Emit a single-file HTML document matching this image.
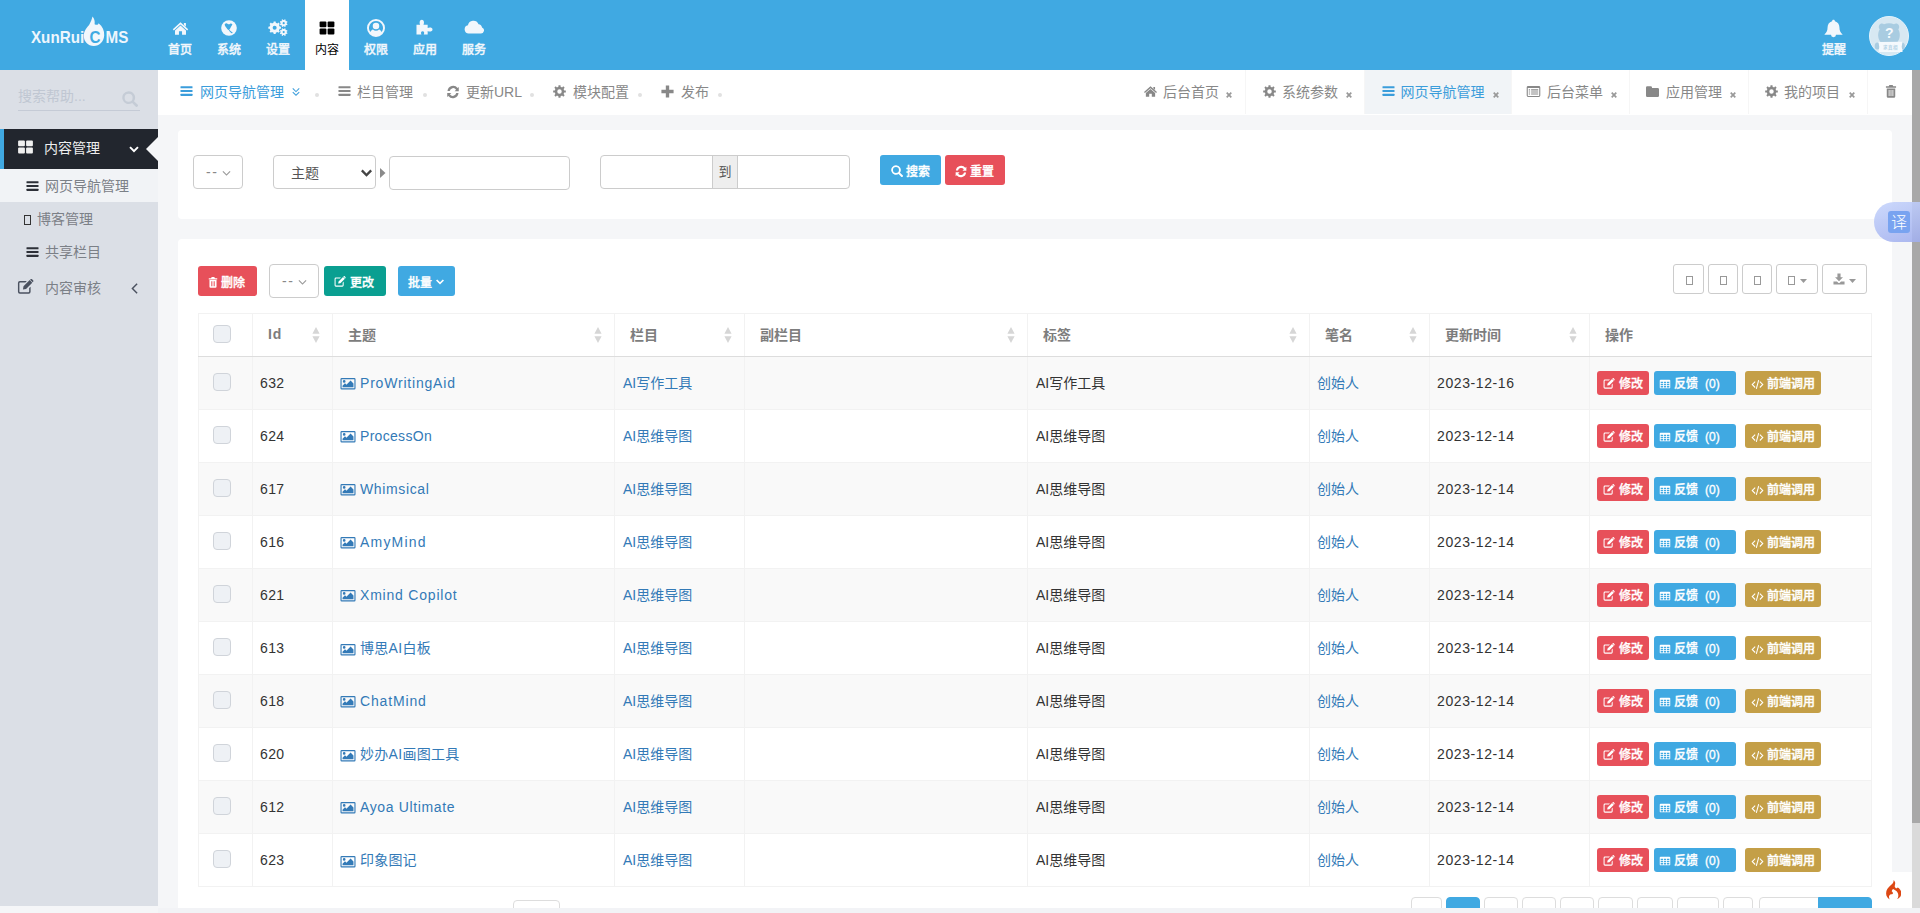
<!DOCTYPE html>
<html lang="zh-CN"><head><meta charset="utf-8"><title>XunRuiCMS</title>
<style>
*{box-sizing:border-box}
html,body{margin:0;padding:0}
body{width:1920px;height:913px;overflow:hidden;position:relative;background:#f5f6f8;font-family:"Liberation Sans","Noto Sans CJK SC",sans-serif;font-size:14px;color:#333}
svg.i{display:inline-block;vertical-align:middle}
a{color:#337ab7;text-decoration:none}
.abs{position:absolute}
/* header */
#hdr{position:absolute;left:0;top:0;width:1920px;height:70px;background:#40a9e2}
#logo{position:absolute;left:31px;top:28px;font:bold 16.500px/18px "Liberation Sans",sans-serif;color:#eef6fd;white-space:nowrap;transform:scaleX(.92);transform-origin:0 0;z-index:3}
#logo .ms{position:absolute;left:81px;top:0}
#logo .c{position:absolute;left:63.500px;top:0;color:#40a9e2;font-size:16.500px}
#flame{position:absolute;left:83px;top:16px}
.nv{position:absolute;top:0;width:44px;height:70px;text-align:center;color:#f2f7fc}
.nv svg{position:absolute;left:14px;top:20px}
.nv span{position:absolute;left:-10px;right:-10px;top:42px;font-size:12px;line-height:16px;font-weight:500;-webkit-text-stroke:.35px currentColor}
.nv.on{background:#fff;color:#000}
.nv.on span{font-weight:400;-webkit-text-stroke:0}
/* sidebar */
#side{position:absolute;left:0;top:70px;width:158px;height:836px;background:#dbdfe6}
#sq{position:absolute;left:18px;top:18px;font-size:14px;line-height:16px;color:#c0c7d2}
#sql{position:absolute;left:18px;top:40px;width:122px;height:1px;background:#c5cbd6}
#side .m1{position:absolute;left:0;top:59px;width:158px;height:40px;background:#22262e;border-left:4px solid #40a9e2;color:#fff}
#side .m1 .t{position:absolute;left:40px;top:9px;color:#eee;font-size:14px;line-height:20px}
#side .m1:after{content:"";position:absolute;right:0;top:8px;border-right:12px solid #f5f6f8;border-top:12px solid transparent;border-bottom:12px solid transparent}
#side .s{position:absolute;left:0;width:158px;height:33px;color:#7b8087;font-size:14px;line-height:35px}
#side .s.on{background:#f1f3f6}
#side .s .t{position:absolute;left:45px;top:0}
#side .m2{position:absolute;left:0;top:198px;width:158px;height:40px;color:#7b8087}
#side .m2 .t{position:absolute;left:45px;top:10px;font-size:14px;line-height:20px}
/* tabs */
#tabs{position:absolute;left:158px;top:70px;width:1754px;height:45px;background:#fff}
#tabs .l{position:absolute;top:0;height:44px;line-height:44px;font-size:14px;color:#888;white-space:nowrap}
#tabs .l.on{color:#3b9ddb}
#tabs .dot{position:absolute;top:23px;width:4px;height:4px;border-radius:2px;background:#e1e1e1}
#tabs .r{position:absolute;top:0;height:44px;line-height:44px;font-size:14px;color:#888;white-space:nowrap;border-left:1px solid #f6f6f6}
#tabs .r.on{background:#f1f4f7;color:#3b9ddb}
#tabs .x{font:bold 10px/10px "Liberation Sans",sans-serif;color:#9a9a9a}
/* panels */
.pan{position:absolute;left:178px;width:1714px;background:#fff;border-radius:4px}
.inp{position:absolute;height:34px;border:1px solid #ccc;border-radius:4px;background:#fff}
.btn{position:absolute;height:30px;border-radius:3px;color:#fff;font-size:12px;line-height:30px;white-space:nowrap;font-weight:500;-webkit-text-stroke:.35px #fff}
.btn.red{background:#e7505a}.btn.blue{background:#40a9e2}.btn.green{background:#0a9f91}
.tb{position:absolute;top:264px;height:30px;border:1px solid #ccc;border-radius:3px;background:#fff;color:#999}
/* table */
table{position:absolute;left:198px;top:313px;border-collapse:collapse;table-layout:fixed;width:1673px}
th,td{border:1px solid #f2f2f2;padding:0;text-align:left;vertical-align:middle;position:relative;white-space:nowrap}
th{height:43px;font-size:14px;font-weight:bold;color:#7d7d7d;border-bottom:1px solid #ddd;padding-left:15px}
th span.h{position:relative;top:-1.500px}
td{height:53px;font-size:14px;color:#333;padding-left:7px}
tr:nth-child(odd) td{background:#f9f9f9}
.srt{position:absolute;right:12px;top:13px}
.cb{display:block;width:18px;height:18px;border:1px solid #d0d4da;border-radius:4px;background:#eef1f5;margin-left:6px;position:relative;top:-1px}
td.c0,th.c0{padding-left:8px}
td.c2 svg{margin-right:4px;position:relative;top:-1px}
.b{position:absolute;top:14px;height:24px;border-radius:3px;color:#fff;font-size:12px;line-height:24px;font-weight:bold;white-space:nowrap}
.b b,.b em{position:absolute;top:1px;font-style:normal;font-weight:500;-webkit-text-stroke:.35px #fff}
.b svg{position:absolute}
.b.red{background:#e7505a;left:7px;width:52px}.b.blue{background:#40a9e2;left:64px;width:82px}.b.yel{background:#c49f47;left:155px;width:76px}
.pg{position:absolute;top:897px;height:20px;border:1px solid #ddd;border-radius:4px 4px 0 0;background:#fff}

.tt{letter-spacing:.8px}
.tt.cj{top:-1px;position:relative}
td.c1{letter-spacing:.4px}
td.c3,td.c5{padding-left:8px}
td.c7{letter-spacing:.6px}
td .cj{position:relative;top:-1px}

</style></head>
<body>
<div id="hdr">
  <svg id="flame" width="22" height="31" viewBox="0 0 22 31"><path fill="#f2f7fc" fill-rule="evenodd" d="M9.500.6C11.500 3 12 5.500 11.600 8.200 13.800 9.400 15.200 8.800 15.600 7.200 19.500 10.500 21.500 14.500 21.200 19.500 20.800 25.500 16.500 30 10.800 30 5 30 .8 25.800.8 19.800.8 13.800 4.500 11.500 6.500 8.200 7.900 5.800 8.800 3.400 9.500.6Z"/></svg>
  <div id="logo">XunRui<span class="c">C</span><span class="ms">MS</span></div>
  <div class="nv" style="left:158px"><svg class="i" width="17" height="13" viewBox="0 0 16 13.500" fill="currentColor" style="left:13.500px;top:21.500px"><path d="M8 .3 16 7.400 14.900 8.700 8 2.700 1.100 8.700 0 7.400Z"/><path d="M8 3.700 13.700 8.700V13.200H9.600V9.600H6.400V13.200H2.300V8.700Z"/><path d="M11.500 1.100h2.100V4.900l-2.100-1.900z"/></svg><span>首页</span></div>
  <div class="nv" style="left:207px"><svg class="i" width="16" height="16" viewBox="0 0 16 16" fill="currentColor" style=""><circle cx="8" cy="8" r="7.800"/><path fill="#40a9e2" d="M3.600 4.600C4.500 3.100 5.800 3.100 6.800 3.900 7.600 4.500 8.400 4.300 9.200 3.700 10 3.300 11 3.700 11.400 4.500 10.600 5.700 10 6.700 9.400 7.900 8.900 8.900 8.400 9.700 7.600 9.900 6.800 9.900 6.200 9.100 5.600 8.100 4.900 7.100 3.900 6.100 3.600 4.600ZM7.700 10 8.300 9.800C9.100 10.800 10 11.600 11.200 12.200L11.900 13.100 10.500 13.200C9.300 12.400 8.300 11.300 7.700 10Z"/></svg><span>系统</span></div>
  <div class="nv" style="left:256px"><svg class="i" width="20" height="17" viewBox="0 0 18.500 16" fill="currentColor" style="left:12px;top:19px"><path fill-rule="evenodd" d="M10.78 7.12 L12.03 7.26 L12.03 9.14 L10.78 9.28 L10.17 10.74 L10.95 11.73 L9.63 13.05 L8.64 12.27 L7.18 12.88 L7.04 14.13 L5.16 14.13 L5.02 12.88 L3.56 12.27 L2.57 13.05 L1.25 11.73 L2.03 10.74 L1.42 9.28 L0.17 9.14 L0.17 7.26 L1.42 7.12 L2.03 5.66 L1.25 4.67 L2.57 3.35 L3.56 4.13 L5.02 3.52 L5.16 2.27 L7.04 2.27 L7.18 3.52 L8.64 4.13 L9.63 3.35 L10.95 4.67 L10.17 5.66Z M4.20 8.20 a1.90 1.90 0 1 0 3.80 0 a1.90 1.90 0 1 0 -3.80 0Z M17.46 4.37 L18.20 4.75 L17.76 5.82 L16.96 5.58 L16.29 6.25 L16.54 7.05 L15.47 7.50 L15.08 6.76 L14.13 6.76 L13.75 7.50 L12.68 7.06 L12.92 6.26 L12.25 5.59 L11.45 5.84 L11.00 4.77 L11.74 4.38 L11.74 3.43 L11.00 3.05 L11.44 1.98 L12.24 2.22 L12.91 1.55 L12.66 0.75 L13.73 0.30 L14.12 1.04 L15.07 1.04 L15.45 0.30 L16.52 0.74 L16.28 1.54 L16.95 2.21 L17.75 1.96 L18.20 3.03 L17.46 3.42Z M13.60 3.90 a1.00 1.00 0 1 0 2.00 0 a1.00 1.00 0 1 0 -2.00 0Z M17.46 12.77 L18.20 13.15 L17.76 14.22 L16.96 13.98 L16.29 14.65 L16.54 15.45 L15.47 15.90 L15.08 15.16 L14.13 15.16 L13.75 15.90 L12.68 15.46 L12.92 14.66 L12.25 13.99 L11.45 14.24 L11.00 13.17 L11.74 12.78 L11.74 11.83 L11.00 11.45 L11.44 10.38 L12.24 10.62 L12.91 9.95 L12.66 9.15 L13.73 8.70 L14.12 9.44 L15.07 9.44 L15.45 8.70 L16.52 9.14 L16.28 9.94 L16.95 10.61 L17.75 10.36 L18.20 11.43 L17.46 11.82Z M13.60 12.30 a1.00 1.00 0 1 0 2.00 0 a1.00 1.00 0 1 0 -2.00 0Z"/></svg><span>设置</span></div>
  <div class="nv on" style="left:305px"><svg class="i" width="16" height="16" viewBox="0 0 16 16" fill="currentColor" style=""><rect x="0.6" y="1.4" width="6.8" height="5.9" rx="1"/><rect x="8.6" y="1.4" width="6.8" height="5.9" rx="1"/><rect x="0.6" y="8.6" width="6.8" height="5.9" rx="1"/><rect x="8.6" y="8.6" width="6.8" height="5.9" rx="1"/></svg><span>内容</span></div>
  <div class="nv" style="left:354px"><svg class="i" width="18" height="18" viewBox="0 0 16 16" fill="currentColor" style="left:13px;top:19px"><path fill-rule="evenodd" d="M8 0a8 8 0 1 0 0 16A8 8 0 0 0 8 0ZM8 1.800a6.200 6.200 0 0 1 5 9.850C12.600 10.300 11.700 9.600 10.700 9.300A3.600 3.600 0 0 1 5.300 9.300C4.300 9.600 3.400 10.300 3 11.650A6.200 6.200 0 0 1 8 1.800ZM8 3.300a2.900 2.900 0 1 0 0 5.800 2.900 2.900 0 0 0 0-5.800Z"/></svg><span>权限</span></div>
  <div class="nv" style="left:403px"><svg class="i" width="17" height="16" viewBox="0 0 17.500 16" fill="currentColor" style="left:13px;top:19px"><path d="M.5 5.600H4.300C3.300 4 3.600.600 6 .600S8.700 4 7.700 5.600H12V9C13.500 8 17 8.100 17 10.500S13.500 13 12 12V15.600H8C8.900 14 8.400 12.300 6.800 12.300S4.700 14 5.600 15.600H.5Z"/></svg><span>应用</span></div>
  <div class="nv" style="left:452px"><svg class="i" width="20" height="14" viewBox="0 0 20 14.500" fill="currentColor" style="left:12px;top:20px"><path d="M4.500 14A4.300 4.300 0 0 1 3.700 5.500 5.800 5.800 0 0 1 14.700 4.300 4 4 0 0 1 18.300 7.700 3.300 3.300 0 0 1 16.500 14Z"/></svg><span>服务</span></div>
  <div class="nv" style="left:1811px"><svg class="i" width="19" height="19" viewBox="0 0 16 16" fill="currentColor" style="left:13px;top:18.500px"><path d="M8 .6c.800 0 1.200.600 1.200 1.200C11.700 2.500 13 4.600 13 7.200c0 2.800 1 4.500 2.500 5.600V13.200H.5V12.800C2 11.700 3 10 3 7.200 3 4.600 4.300 2.500 6.800 1.800 6.800 1.200 7.200.6 8 .600ZM5.900 13.200h4.200a2.100 2.100 0 0 1-4.200 0Z"/></svg><span style="left:-9px;right:-11px">提醒</span></div>
  <svg id="ava" style="position:absolute;left:1869px;top:16px" width="40" height="40" viewBox="0 0 40 40">
    <circle cx="20" cy="20" r="19.500" fill="#d7e8f2" stroke="#e4f3fc" stroke-width="1"/>
    <path fill="#a9cce1" d="M10.200 9.200C11.200 7.300 13.600 7.100 15 8.300 18 7 22 7 25 8.300 26.400 7.100 28.800 7.300 29.800 9.200 30.600 10.700 30.200 12.300 29.300 13.200 31.500 17 31.400 22 28.500 26H11.500C8.600 22 8.500 17 10.700 13.200 9.800 12.300 9.400 10.700 10.200 9.200Z"/>
    <ellipse cx="8.300" cy="30" rx="2.600" ry="3.600" fill="#a9cce1"/><ellipse cx="33.200" cy="30" rx="2.600" ry="3.600" fill="#a9cce1"/>
    <path fill="#f4f9fd" d="M9.500 26 33.500 25.700 32.700 30.800 33.600 36 9.600 36 10.300 31Z"/>
    <text x="21.500" y="33.300" font-family="Liberation Sans, Noto Sans CJK SC, sans-serif" font-size="4.500" font-weight="bold" fill="#b5d3e5" text-anchor="middle" letter-spacing=".5">求真相</text>
    <text x="20.300" y="22.300" font-family="Liberation Sans, sans-serif" font-size="14" font-weight="bold" fill="#f6fafd" text-anchor="middle">?</text>
  </svg>
</div>

<div id="side">
  <div id="sq">搜索帮助...</div>
  <div id="sql"></div>
  <svg class="i" width="16" height="16" viewBox="0 0 14 14" fill="currentColor" style="position:absolute;left:122px;top:21px;color:#c5ccd6"><path fill-rule="evenodd" d="M5.800.2A5.600 5.600 0 1 0 8.900 10.500L11.900 13.600A1.200 1.200 0 0 0 13.600 11.900L10.500 8.900A5.600 5.600 0 0 0 5.800.2ZM5.800 2.300A3.500 3.500 0 1 1 5.800 9.300 3.500 3.500 0 0 1 5.800 2.300Z"/></svg>
  <div class="m1"><svg class="i" width="17" height="16" viewBox="0 0 16 16" fill="currentColor" style="position:absolute;left:12.500px;top:10px;color:#f0f0f0"><rect x="0.6" y="1.4" width="6.8" height="5.9" rx="1"/><rect x="8.6" y="1.4" width="6.8" height="5.9" rx="1"/><rect x="0.6" y="8.6" width="6.8" height="5.9" rx="1"/><rect x="8.6" y="8.6" width="6.8" height="5.9" rx="1"/></svg><span class="t">内容管理</span><svg class="i" width="10" height="7" viewBox="0 0 10 7.500" fill="currentColor" style="position:absolute;left:125px;top:17px"><path d="M1.500.5 5 4 8.500.5 10 2 5 7 0 2Z"/></svg></div>
  <div class="s on" style="top:99px"><svg class="i" width="13" height="12" viewBox="0 0 12 12" fill="currentColor" style="position:absolute;left:25.500px;top:11px;color:#2d3038"><rect x="0" y="1.200" width="12" height="2.100" rx=".4"/><rect x="0" y="5" width="12" height="2.100" rx=".4"/><rect x="0" y="8.800" width="12" height="2.100" rx=".4"/></svg><span class="t">网页导航管理</span></div>
  <div class="s" style="top:132px"><span style="position:absolute;left:24px;top:13px;width:7px;height:10px;border:1px solid #333"></span><span class="t" style="left:37px">博客管理</span></div>
  <div class="s" style="top:165px"><svg class="i" width="13" height="12" viewBox="0 0 12 12" fill="currentColor" style="position:absolute;left:25.500px;top:11px;color:#2d3038"><rect x="0" y="1.200" width="12" height="2.100" rx=".4"/><rect x="0" y="5" width="12" height="2.100" rx=".4"/><rect x="0" y="8.800" width="12" height="2.100" rx=".4"/></svg><span class="t">共享栏目</span></div>
  <div class="m2"><svg class="i" width="17" height="15" viewBox="0 0 15 13.500" fill="currentColor" style="position:absolute;left:17px;top:11px;color:#4b5260"><path d="M2.400 1.800H8.700L7.400 3.100H2.600C2.300 3.100 2 3.400 2 3.700V11.300C2 11.600 2.300 11.900 2.600 11.900H10.200C10.500 11.900 10.800 11.600 10.800 11.300V8.200L12.100 6.900V11.500A1.700 1.700 0 0 1 10.400 13.200H2.400A1.700 1.700 0 0 1 .7 11.500V3.500A1.700 1.700 0 0 1 2.400 1.800Z"/><path d="M11.300 1 13.600 3.300 8 8.900 5.200 9.400 5.700 6.600ZM12 .3C12.400-.1 13-.1 13.400.3L14.300 1.200C14.700 1.600 14.700 2.200 14.300 2.600L14 2.900 11.700.6Z"/></svg><span class="t">内容审核</span><svg class="i" width="7" height="11" viewBox="0 0 7.500 11.200" fill="currentColor" style="position:absolute;left:131px;top:15px;color:#4b5260"><path d="M6 0 7.100 1.100 2.600 5.600 7.100 10.100 6 11.200.4 5.600Z"/></svg></div>
</div>

<div id="tabs">
  <div class="l on" style="left:22px"><svg class="i" width="13" height="12" viewBox="0 0 12 12" fill="currentColor" style="position:relative;top:-2px;margin-right:7px"><rect x="0" y="1.200" width="12" height="2.100" rx=".4"/><rect x="0" y="5" width="12" height="2.100" rx=".4"/><rect x="0" y="8.800" width="12" height="2.100" rx=".4"/></svg>网页导航管理<svg class="i" width="8" height="8" viewBox="0 0 9 10" fill="currentColor" style="position:relative;top:-1px;margin-left:8px"><path d="M.9 0 4.500 3.600 8.100 0 9 .9 4.500 5.400 0 .9ZM.9 4.600 4.500 8.200 8.100 4.600 9 5.500 4.500 10 0 5.500Z"/></svg></div>
  <div class="dot" style="left:157px"></div>
  <div class="l" style="left:180px"><svg class="i" width="13" height="12" viewBox="0 0 12 12" fill="currentColor" style="position:relative;top:-2px;margin-right:6px"><rect x="0" y="1.200" width="12" height="2.100" rx=".4"/><rect x="0" y="5" width="12" height="2.100" rx=".4"/><rect x="0" y="8.800" width="12" height="2.100" rx=".4"/></svg>栏目管理</div>
  <div class="dot" style="left:265px"></div>
  <div class="l" style="left:288px"><svg class="i" width="14" height="14" viewBox="0 0 14 16" fill="currentColor" style="position:relative;top:-1px;margin-right:6px"><path d="M13.600 7H8.800L10.500 5.300A4 4 0 0 0 3.300 6.800H.7A6.500 6.500 0 0 1 12.300 3.500L13.600 2.200ZM.4 9H5.200L3.500 10.700A4 4 0 0 0 10.700 9.200H13.300A6.500 6.500 0 0 1 1.700 12.500L.4 13.800Z"/></svg>更新URL</div>
  <div class="dot" style="left:372px"></div>
  <div class="l" style="left:395px"><svg class="i" width="13" height="13" viewBox="0 0 14 14" fill="currentColor" style="position:relative;top:-2px;margin-right:7px"><path fill-rule="evenodd" d="M12.07 5.83 L13.82 5.92 L13.82 8.08 L12.07 8.17 L11.41 9.75 L12.58 11.06 L11.06 12.58 L9.75 11.41 L8.17 12.07 L8.08 13.82 L5.92 13.82 L5.83 12.07 L4.25 11.41 L2.94 12.58 L1.42 11.06 L2.59 9.75 L1.93 8.17 L0.18 8.08 L0.18 5.92 L1.93 5.83 L2.59 4.25 L1.42 2.94 L2.94 1.42 L4.25 2.59 L5.83 1.93 L5.92 0.18 L8.08 0.18 L8.17 1.93 L9.75 2.59 L11.06 1.42 L12.58 2.94 L11.41 4.25Z M4.60 7.00 a2.40 2.40 0 1 0 4.80 0 a2.40 2.40 0 1 0 -4.80 0Z"/></svg>模块配置</div>
  <div class="dot" style="left:480px"></div>
  <div class="l" style="left:503px"><svg class="i" width="13" height="13" viewBox="0 0 12.400 12.400" fill="currentColor" style="position:relative;top:-2px;margin-right:7px"><path d="M4.600.4H7.800V4.600H12V7.800H7.800V12H4.600V7.800H.4V4.600H4.600Z"/></svg>发布</div>
  <div class="dot" style="left:560px"></div>

  <div class="r" style="left:968px;width:119px;border-left:0"><span style="position:absolute;left:18px"><svg class="i" width="13" height="11" viewBox="0 0 16 13.500" fill="currentColor" style="position:relative;top:-2px;margin-right:6px"><path d="M8 .3 16 7.400 14.900 8.700 8 2.700 1.100 8.700 0 7.400Z"/><path d="M8 3.700 13.700 8.700V13.200H9.600V9.600H6.400V13.200H2.300V8.700Z"/><path d="M11.500 1.100h2.100V4.900l-2.100-1.900z"/></svg>后台首页</span><svg class="abs" style="left:99.5px;top:22px" width="6" height="6" viewBox="0 0 6 6"><path d="M.7.7 5.300 5.300M5.300.7.7 5.300" stroke="#999" stroke-width="1.700" fill="none"/></svg></div>
  <div class="r" style="left:1087px;width:119px"><span style="position:absolute;left:17px"><svg class="i" width="13" height="13" viewBox="0 0 14 14" fill="currentColor" style="position:relative;top:-2px;margin-right:6px"><path fill-rule="evenodd" d="M12.07 5.83 L13.82 5.92 L13.82 8.08 L12.07 8.17 L11.41 9.75 L12.58 11.06 L11.06 12.58 L9.75 11.41 L8.17 12.07 L8.08 13.82 L5.92 13.82 L5.83 12.07 L4.25 11.41 L2.94 12.58 L1.42 11.06 L2.59 9.75 L1.93 8.17 L0.18 8.08 L0.18 5.92 L1.93 5.83 L2.59 4.25 L1.42 2.94 L2.94 1.42 L4.25 2.59 L5.83 1.93 L5.92 0.18 L8.08 0.18 L8.17 1.93 L9.75 2.59 L11.06 1.42 L12.58 2.94 L11.41 4.25Z M4.60 7.00 a2.40 2.40 0 1 0 4.80 0 a2.40 2.40 0 1 0 -4.80 0Z"/></svg>系统参数</span><svg class="abs" style="left:99.5px;top:22px" width="6" height="6" viewBox="0 0 6 6"><path d="M.7.7 5.300 5.300M5.300.7.7 5.300" stroke="#999" stroke-width="1.700" fill="none"/></svg></div>
  <div class="r on" style="left:1205.500px;width:147px"><span style="position:absolute;left:17px"><svg class="i" width="13" height="12" viewBox="0 0 12 12" fill="currentColor" style="position:relative;top:-2px;margin-right:6px"><rect x="0" y="1.200" width="12" height="2.100" rx=".4"/><rect x="0" y="5" width="12" height="2.100" rx=".4"/><rect x="0" y="8.800" width="12" height="2.100" rx=".4"/></svg>网页导航管理</span><svg class="abs" style="left:128px;top:22px" width="6" height="6" viewBox="0 0 6 6"><path d="M.7.7 5.300 5.300M5.300.7.7 5.300" stroke="#999" stroke-width="1.700" fill="none"/></svg></div>
  <div class="r" style="left:1353px;width:118px"><span style="position:absolute;left:14px"><svg class="i" width="15" height="13" viewBox="0 0 14 13" fill="currentColor" style="position:relative;top:-2px;margin-right:6px"><path fill-rule="evenodd" d="M1.600 1H12.400A1.400 1.400 0 0 1 13.800 2.400V10.600A1.400 1.400 0 0 1 12.400 12H1.600A1.400 1.400 0 0 1 .2 10.600V2.400A1.400 1.400 0 0 1 1.600 1ZM1.300 3.100V10.600C1.300 10.800 1.400 10.900 1.600 10.900H12.400C12.600 10.900 12.700 10.800 12.700 10.600V3.100ZM2.300 4.300H3.600V5.400H2.300ZM4.600 4.300H11.700V5.400H4.600ZM2.300 6.400H3.600V7.500H2.300ZM4.600 6.400H11.700V7.500H4.600ZM2.300 8.500H3.600V9.600H2.300ZM4.600 8.500H11.700V9.600H4.600Z"/></svg>后台菜单</span><svg class="abs" style="left:99px;top:22px" width="6" height="6" viewBox="0 0 6 6"><path d="M.7.7 5.300 5.300M5.300.7.7 5.300" stroke="#999" stroke-width="1.700" fill="none"/></svg></div>
  <div class="r" style="left:1471px;width:119px"><span style="position:absolute;left:15px"><svg class="i" width="15" height="13" viewBox="0 0 14 13" fill="currentColor" style="position:relative;top:-2px;margin-right:6px"><path d="M.5 2.500A1.300 1.300 0 0 1 1.800 1.200H5.200A1.300 1.300 0 0 1 6.500 2.500V3H12.200A1.300 1.300 0 0 1 13.500 4.300V10.700A1.300 1.300 0 0 1 12.200 12H1.800A1.300 1.300 0 0 1 .5 10.700Z"/></svg>应用管理</span><svg class="abs" style="left:99.5px;top:22px" width="6" height="6" viewBox="0 0 6 6"><path d="M.7.7 5.300 5.300M5.300.7.7 5.300" stroke="#999" stroke-width="1.700" fill="none"/></svg></div>
  <div class="r" style="left:1590px;width:119px"><span style="position:absolute;left:16px"><svg class="i" width="13" height="13" viewBox="0 0 14 14" fill="currentColor" style="position:relative;top:-2px;margin-right:6px"><path fill-rule="evenodd" d="M12.07 5.83 L13.82 5.92 L13.82 8.08 L12.07 8.17 L11.41 9.75 L12.58 11.06 L11.06 12.58 L9.75 11.41 L8.17 12.07 L8.08 13.82 L5.92 13.82 L5.83 12.07 L4.25 11.41 L2.94 12.58 L1.42 11.06 L2.59 9.75 L1.93 8.17 L0.18 8.08 L0.18 5.92 L1.93 5.83 L2.59 4.25 L1.42 2.94 L2.94 1.42 L4.25 2.59 L5.83 1.93 L5.92 0.18 L8.08 0.18 L8.17 1.93 L9.75 2.59 L11.06 1.42 L12.58 2.94 L11.41 4.25Z M4.60 7.00 a2.40 2.40 0 1 0 4.80 0 a2.40 2.40 0 1 0 -4.80 0Z"/></svg>我的项目</span><svg class="abs" style="left:99.5px;top:22px" width="6" height="6" viewBox="0 0 6 6"><path d="M.7.7 5.300 5.300M5.300.7.7 5.300" stroke="#999" stroke-width="1.700" fill="none"/></svg></div>
  <div class="r" style="left:1709px;width:45px"><svg class="i" width="12" height="13" viewBox="0 0 13 14" fill="currentColor" style="position:absolute;left:17px;top:15px"><path fill-rule="evenodd" d="M4 1.400 4.800 0H8.200L9 1.400H12V3H1V1.400ZM1.900 3.800H11.100V12.500A1.400 1.400 0 0 1 9.700 13.900H3.300A1.400 1.400 0 0 1 1.900 12.500ZM4 5.500V12H4.900V5.500ZM6.050 5.500V12H6.950V5.500ZM8.100 5.500V12H9V5.500Z"/></svg></div>
</div>

<div class="pan" style="top:130px;height:89px"></div>
<div class="pan" style="top:239px;height:690px"></div>

<div class="inp" style="left:193px;top:155px;width:50px"><span style="position:absolute;left:12px;top:8px;font-size:14px;line-height:16px;color:#888;letter-spacing:1.500px">--</span><svg class="i" width="9" height="6" viewBox="0 0 10 7.500" fill="currentColor" style="position:absolute;left:28px;top:14px;color:#999"><path d="M1 1.200 5 5.200 9 1.200 10 2.200 5 7.200 0 2.200Z"/></svg></div>
<div class="inp" style="left:273px;top:155px;width:103px"><span style="position:absolute;left:17px;top:8px;font-size:14px;line-height:18px;color:#555">主题</span><svg class="i" width="11" height="8" viewBox="0 0 10 7.200" fill="currentColor" style="position:absolute;left:87px;top:12.500px;color:#444"><path d="M1.500.5 5 4 8.500.5 10 2 5 7 0 2Z"/></svg></div>
<svg class="abs" style="left:380px;top:168px" width="6" height="10" viewBox="0 0 6 10"><path d="M0 0 5.500 5 0 10Z" fill="#8a8a8a"/></svg>
<div class="inp" style="left:389px;top:156px;width:181px"></div>
<div class="inp" style="left:600px;top:155px;width:250px"><div style="position:absolute;left:111px;top:-1px;width:26px;height:34px;background:#eee;border:1px solid #ccc;text-align:center;line-height:32px;font-size:13px;color:#555">到</div></div>
<div class="btn blue" style="left:880px;top:155px;width:61px"><svg class="i" width="12" height="12" viewBox="0 0 14 14" fill="currentColor" style="position:absolute;left:11px;top:10px"><path fill-rule="evenodd" d="M5.800.2A5.600 5.600 0 1 0 8.900 10.500L11.900 13.600A1.200 1.200 0 0 0 13.600 11.900L10.500 8.900A5.600 5.600 0 0 0 5.800.2ZM5.800 2.300A3.500 3.500 0 1 1 5.800 9.300 3.500 3.500 0 0 1 5.800 2.300Z"/></svg><span style="position:absolute;left:26px;top:1.500px">搜索</span></div>
<div class="btn red" style="left:945px;top:155px;width:60px"><svg class="i" width="12" height="13" viewBox="0 0 14 16" fill="currentColor" style="position:absolute;left:10px;top:9.500px"><path d="M13.600 7H8.800L10.500 5.300A4 4 0 0 0 3.300 6.800H.7A6.500 6.500 0 0 1 12.300 3.500L13.600 2.200ZM.4 9H5.200L3.500 10.700A4 4 0 0 0 10.700 9.200H13.300A6.500 6.500 0 0 1 1.700 12.500L.4 13.800Z"/></svg><span style="position:absolute;left:25px;top:1.500px">重置</span></div>

<div class="btn red" style="left:198px;top:266px;width:59px"><svg class="i" width="10" height="11" viewBox="0 0 13 14" fill="currentColor" style="position:absolute;left:10px;top:10.500px"><path fill-rule="evenodd" d="M4 1.400 4.800 0H8.200L9 1.400H12V3H1V1.400ZM1.900 3.800H11.100V12.500A1.400 1.400 0 0 1 9.700 13.900H3.300A1.400 1.400 0 0 1 1.900 12.500ZM4 5.500V12H4.900V5.500ZM6.050 5.500V12H6.950V5.500ZM8.100 5.500V12H9V5.500Z"/></svg><span style="position:absolute;left:23px;top:1.500px">删除</span></div>
<div class="inp" style="left:269px;top:264px;width:50px"><span style="position:absolute;left:12px;top:8px;font-size:14px;line-height:16px;color:#888;letter-spacing:1.500px">--</span><svg class="i" width="9" height="6" viewBox="0 0 10 7.500" fill="currentColor" style="position:absolute;left:28px;top:14px;color:#999"><path d="M1 1.200 5 5.200 9 1.200 10 2.200 5 7.200 0 2.200Z"/></svg></div>
<div class="btn green" style="left:324px;top:266px;width:62px"><svg class="i" width="12" height="11" viewBox="0 0 15 13.500" fill="currentColor" style="position:absolute;left:10px;top:10px"><path d="M2.400 1.800H8.700L7.400 3.100H2.600C2.300 3.100 2 3.400 2 3.700V11.300C2 11.600 2.300 11.900 2.600 11.900H10.200C10.500 11.900 10.800 11.600 10.800 11.300V8.200L12.100 6.900V11.500A1.700 1.700 0 0 1 10.400 13.200H2.400A1.700 1.700 0 0 1 .7 11.500V3.500A1.700 1.700 0 0 1 2.400 1.800Z"/><path d="M11.300 1 13.600 3.300 8 8.900 5.200 9.400 5.700 6.600ZM12 .3C12.400-.1 13-.1 13.400.3L14.300 1.200C14.700 1.600 14.700 2.200 14.300 2.600L14 2.900 11.700.6Z"/></svg><span style="position:absolute;left:26px;top:1.500px">更改</span></div>
<div class="btn blue" style="left:398px;top:266px;width:57px"><span style="position:absolute;left:10px;top:1.500px">批量</span><svg class="i" width="8" height="6" viewBox="0 0 10 7.500" fill="currentColor" style="position:absolute;left:38px;top:13px"><path d="M1.500.5 5 4 8.500.5 10 2 5 7 0 2Z"/></svg></div>

<div class="tb" style="left:1673px;width:31px"><span style="position:absolute;left:12px;top:11px;width:7px;height:9px;border:1px solid #999"></span></div>
<div class="tb" style="left:1708px;width:30px"><span style="position:absolute;left:11px;top:11px;width:7px;height:9px;border:1px solid #999"></span></div>
<div class="tb" style="left:1742px;width:30px"><span style="position:absolute;left:11px;top:11px;width:7px;height:9px;border:1px solid #999"></span></div>
<div class="tb" style="left:1776px;width:42px"><span style="position:absolute;left:11px;top:11px;width:7px;height:9px;border:1px solid #999"></span><svg class="i" width="7" height="4" viewBox="0 0 8 4.500" fill="currentColor" style="position:absolute;left:23px;top:14px"><path d="M0 0H8L4 4.500Z"/></svg></div>
<div class="tb" style="left:1822px;width:45px"><svg class="i" width="12" height="12" viewBox="0 0 13 13" fill="currentColor" style="position:absolute;left:10px;top:8px"><path d="M4.800.5H8.200V4.600H10.800L6.500 8.900 2.200 4.600H4.800ZM.5 9.200H4.300L5.700 10.600C6.100 11 6.900 11 7.300 10.600L8.700 9.200H12.500V12.500H.5Z"/></svg><svg class="i" width="7" height="4" viewBox="0 0 8 4.500" fill="currentColor" style="position:absolute;left:26px;top:14px"><path d="M0 0H8L4 4.500Z"/></svg></div>

<table>
<colgroup><col style="width:54px"><col style="width:80px"><col style="width:282px"><col style="width:130px"><col style="width:283px"><col style="width:282px"><col style="width:120px"><col style="width:160px"><col style="width:282px"></colgroup>
<thead><tr><th class="c0"><span class="cb"></span></th><th style="padding-left:15px"><span class="h" style="letter-spacing:.9px">Id</span><svg class="srt" width="8" height="16" viewBox="0 0 8 16"><path d="M4 0 7.600 6.800H.4Z" fill="#d6d6d6"/><path d="M4 16 7.600 9.200H.4Z" fill="#d6d6d6"/></svg></th><th><span class="h">主题</span><svg class="srt" width="8" height="16" viewBox="0 0 8 16"><path d="M4 0 7.600 6.800H.4Z" fill="#d6d6d6"/><path d="M4 16 7.600 9.200H.4Z" fill="#d6d6d6"/></svg></th><th><span class="h">栏目</span><svg class="srt" width="8" height="16" viewBox="0 0 8 16"><path d="M4 0 7.600 6.800H.4Z" fill="#d6d6d6"/><path d="M4 16 7.600 9.200H.4Z" fill="#d6d6d6"/></svg></th><th><span class="h">副栏目</span><svg class="srt" width="8" height="16" viewBox="0 0 8 16"><path d="M4 0 7.600 6.800H.4Z" fill="#d6d6d6"/><path d="M4 16 7.600 9.200H.4Z" fill="#d6d6d6"/></svg></th><th><span class="h">标签</span><svg class="srt" width="8" height="16" viewBox="0 0 8 16"><path d="M4 0 7.600 6.800H.4Z" fill="#d6d6d6"/><path d="M4 16 7.600 9.200H.4Z" fill="#d6d6d6"/></svg></th><th><span class="h">笔名</span><svg class="srt" width="8" height="16" viewBox="0 0 8 16"><path d="M4 0 7.600 6.800H.4Z" fill="#d6d6d6"/><path d="M4 16 7.600 9.200H.4Z" fill="#d6d6d6"/></svg></th><th><span class="h">更新时间</span><svg class="srt" width="8" height="16" viewBox="0 0 8 16"><path d="M4 0 7.600 6.800H.4Z" fill="#d6d6d6"/><path d="M4 16 7.600 9.200H.4Z" fill="#d6d6d6"/></svg></th><th><span class="h">操作</span></th></tr></thead>
<tbody>
<tr><td class="c0"><span class="cb"></span></td><td class="c1">632</td><td class="c2"><a><svg class="i" width="16" height="13" viewBox="0 0 15 12.600" fill="currentColor" style=""><path fill-rule="evenodd" d="M1.400 1H13.600A1.200 1.200 0 0 1 14.800 2.200V10.800A1.200 1.200 0 0 1 13.600 12H1.400A1.200 1.200 0 0 1 .2 10.800V2.200A1.200 1.200 0 0 1 1.400 1ZM1.300 2.100V10.900H13.700V2.100ZM2.200 10V8.400L4.600 6 6 7.400 10 3.500 12.800 6.300V10ZM3.800 3A1.300 1.300 0 1 0 3.800 5.600 1.300 1.300 0 0 0 3.800 3Z"/></svg><span class="tt" style="letter-spacing:.8px">ProWritingAid</span></a></td><td class="c3"><a class="cj">AI写作工具</a></td><td class="c4"></td><td class="c5"><span class="cj">AI写作工具</span></td><td class="c6"><a class="cj">创始人</a></td><td class="c7">2023-12-16</td><td class="c8"><span class="b red"><svg class="i" width="12" height="11" viewBox="0 0 15 13.500" fill="currentColor" style="left:6px;top:6.500px"><path d="M2.400 1.800H8.700L7.400 3.100H2.600C2.300 3.100 2 3.400 2 3.700V11.300C2 11.600 2.300 11.900 2.600 11.900H10.200C10.500 11.900 10.800 11.600 10.800 11.300V8.200L12.100 6.900V11.500A1.700 1.700 0 0 1 10.400 13.200H2.400A1.700 1.700 0 0 1 .7 11.500V3.500A1.700 1.700 0 0 1 2.400 1.800Z"/><path d="M11.300 1 13.600 3.300 8 8.900 5.200 9.400 5.700 6.600ZM12 .3C12.400-.1 13-.1 13.400.3L14.300 1.200C14.700 1.600 14.700 2.200 14.300 2.600L14 2.900 11.700.6Z"/></svg><b style="left:22px">修改</b></span><span class="b blue"><svg class="i" width="12" height="10" viewBox="0 0 13 12" fill="currentColor" style="left:5px;top:7.500px"><path fill-rule="evenodd" d="M1.300.8H11.700A1.100 1.100 0 0 1 12.800 1.900V10.100A1.100 1.100 0 0 1 11.700 11.200H1.300A1.100 1.100 0 0 1 .2 10.100V1.900A1.100 1.100 0 0 1 1.300.8ZM1.300 3.200V5H4.100V3.200ZM5.100 3.200V5H7.900V3.200ZM8.900 3.200V5H11.700V3.200ZM1.300 5.900V7.600H4.100V5.900ZM5.100 5.900V7.600H7.900V5.900ZM8.900 5.900V7.600H11.700V5.900ZM1.300 8.500V10.200H4.100V8.500ZM5.100 8.500V10.200H7.900V8.500ZM8.900 8.500V10.200H11.700V8.500Z"/></svg><b style="left:20px">反馈</b><em style="left:51px">(0)</em></span><span class="b yel"><svg class="i" width="13" height="11" viewBox="0 0 15 13" fill="currentColor" style="left:6px;top:7.500px"><path d="M4.300 2.700 5.200 3.600 2.200 6.600 5.200 9.600 4.300 10.500.4 6.600ZM10.700 2.700 14.600 6.600 10.700 10.500 9.800 9.600 12.800 6.600 9.800 3.600ZM8.300 1.300 9.500 1.600 6.700 11.900 5.500 11.600Z"/></svg><b style="left:22px">前端调用</b></span></td></tr>
<tr><td class="c0"><span class="cb"></span></td><td class="c1">624</td><td class="c2"><a><svg class="i" width="16" height="13" viewBox="0 0 15 12.600" fill="currentColor" style=""><path fill-rule="evenodd" d="M1.400 1H13.600A1.200 1.200 0 0 1 14.800 2.200V10.800A1.200 1.200 0 0 1 13.600 12H1.400A1.200 1.200 0 0 1 .2 10.800V2.200A1.200 1.200 0 0 1 1.400 1ZM1.300 2.100V10.900H13.700V2.100ZM2.200 10V8.400L4.600 6 6 7.400 10 3.500 12.800 6.300V10ZM3.800 3A1.300 1.300 0 1 0 3.800 5.600 1.300 1.300 0 0 0 3.800 3Z"/></svg><span class="tt" style="letter-spacing:.31px">ProcessOn</span></a></td><td class="c3"><a class="cj">AI思维导图</a></td><td class="c4"></td><td class="c5"><span class="cj">AI思维导图</span></td><td class="c6"><a class="cj">创始人</a></td><td class="c7">2023-12-14</td><td class="c8"><span class="b red"><svg class="i" width="12" height="11" viewBox="0 0 15 13.500" fill="currentColor" style="left:6px;top:6.500px"><path d="M2.400 1.800H8.700L7.400 3.100H2.600C2.300 3.100 2 3.400 2 3.700V11.300C2 11.600 2.300 11.900 2.600 11.900H10.200C10.500 11.900 10.800 11.600 10.800 11.300V8.200L12.100 6.900V11.500A1.700 1.700 0 0 1 10.400 13.200H2.400A1.700 1.700 0 0 1 .7 11.500V3.500A1.700 1.700 0 0 1 2.400 1.800Z"/><path d="M11.300 1 13.600 3.300 8 8.900 5.200 9.400 5.700 6.600ZM12 .3C12.400-.1 13-.1 13.400.3L14.300 1.200C14.700 1.600 14.700 2.200 14.300 2.600L14 2.900 11.700.6Z"/></svg><b style="left:22px">修改</b></span><span class="b blue"><svg class="i" width="12" height="10" viewBox="0 0 13 12" fill="currentColor" style="left:5px;top:7.500px"><path fill-rule="evenodd" d="M1.300.8H11.700A1.100 1.100 0 0 1 12.800 1.900V10.100A1.100 1.100 0 0 1 11.700 11.200H1.300A1.100 1.100 0 0 1 .2 10.100V1.900A1.100 1.100 0 0 1 1.300.8ZM1.300 3.200V5H4.100V3.200ZM5.100 3.200V5H7.900V3.200ZM8.900 3.200V5H11.700V3.200ZM1.300 5.900V7.600H4.100V5.900ZM5.100 5.900V7.600H7.900V5.900ZM8.900 5.900V7.600H11.700V5.900ZM1.300 8.500V10.200H4.100V8.500ZM5.100 8.500V10.200H7.900V8.500ZM8.900 8.500V10.200H11.700V8.500Z"/></svg><b style="left:20px">反馈</b><em style="left:51px">(0)</em></span><span class="b yel"><svg class="i" width="13" height="11" viewBox="0 0 15 13" fill="currentColor" style="left:6px;top:7.500px"><path d="M4.300 2.700 5.200 3.600 2.200 6.600 5.200 9.600 4.300 10.500.4 6.600ZM10.700 2.700 14.600 6.600 10.700 10.500 9.800 9.600 12.800 6.600 9.800 3.600ZM8.300 1.300 9.500 1.600 6.700 11.900 5.500 11.600Z"/></svg><b style="left:22px">前端调用</b></span></td></tr>
<tr><td class="c0"><span class="cb"></span></td><td class="c1">617</td><td class="c2"><a><svg class="i" width="16" height="13" viewBox="0 0 15 12.600" fill="currentColor" style=""><path fill-rule="evenodd" d="M1.400 1H13.600A1.200 1.200 0 0 1 14.800 2.200V10.800A1.200 1.200 0 0 1 13.600 12H1.400A1.200 1.200 0 0 1 .2 10.800V2.200A1.200 1.200 0 0 1 1.400 1ZM1.300 2.100V10.900H13.700V2.100ZM2.200 10V8.400L4.600 6 6 7.400 10 3.500 12.800 6.300V10ZM3.800 3A1.300 1.300 0 1 0 3.800 5.600 1.300 1.300 0 0 0 3.800 3Z"/></svg><span class="tt" style="letter-spacing:.63px">Whimsical</span></a></td><td class="c3"><a class="cj">AI思维导图</a></td><td class="c4"></td><td class="c5"><span class="cj">AI思维导图</span></td><td class="c6"><a class="cj">创始人</a></td><td class="c7">2023-12-14</td><td class="c8"><span class="b red"><svg class="i" width="12" height="11" viewBox="0 0 15 13.500" fill="currentColor" style="left:6px;top:6.500px"><path d="M2.400 1.800H8.700L7.400 3.100H2.600C2.300 3.100 2 3.400 2 3.700V11.300C2 11.600 2.300 11.900 2.600 11.900H10.200C10.500 11.900 10.800 11.600 10.800 11.300V8.200L12.100 6.900V11.500A1.700 1.700 0 0 1 10.400 13.200H2.400A1.700 1.700 0 0 1 .7 11.500V3.500A1.700 1.700 0 0 1 2.400 1.800Z"/><path d="M11.300 1 13.600 3.300 8 8.900 5.200 9.400 5.700 6.600ZM12 .3C12.400-.1 13-.1 13.400.3L14.300 1.200C14.700 1.600 14.700 2.200 14.300 2.600L14 2.900 11.700.6Z"/></svg><b style="left:22px">修改</b></span><span class="b blue"><svg class="i" width="12" height="10" viewBox="0 0 13 12" fill="currentColor" style="left:5px;top:7.500px"><path fill-rule="evenodd" d="M1.300.8H11.700A1.100 1.100 0 0 1 12.800 1.900V10.100A1.100 1.100 0 0 1 11.700 11.200H1.300A1.100 1.100 0 0 1 .2 10.100V1.900A1.100 1.100 0 0 1 1.300.8ZM1.300 3.200V5H4.100V3.200ZM5.100 3.200V5H7.900V3.200ZM8.900 3.200V5H11.700V3.200ZM1.300 5.900V7.600H4.100V5.900ZM5.100 5.900V7.600H7.900V5.900ZM8.900 5.900V7.600H11.700V5.900ZM1.300 8.500V10.200H4.100V8.500ZM5.100 8.500V10.200H7.900V8.500ZM8.900 8.500V10.200H11.700V8.500Z"/></svg><b style="left:20px">反馈</b><em style="left:51px">(0)</em></span><span class="b yel"><svg class="i" width="13" height="11" viewBox="0 0 15 13" fill="currentColor" style="left:6px;top:7.500px"><path d="M4.300 2.700 5.200 3.600 2.200 6.600 5.200 9.600 4.300 10.500.4 6.600ZM10.700 2.700 14.600 6.600 10.700 10.500 9.800 9.600 12.800 6.600 9.800 3.600ZM8.300 1.300 9.500 1.600 6.700 11.900 5.500 11.600Z"/></svg><b style="left:22px">前端调用</b></span></td></tr>
<tr><td class="c0"><span class="cb"></span></td><td class="c1">616</td><td class="c2"><a><svg class="i" width="16" height="13" viewBox="0 0 15 12.600" fill="currentColor" style=""><path fill-rule="evenodd" d="M1.400 1H13.600A1.200 1.200 0 0 1 14.800 2.200V10.800A1.200 1.200 0 0 1 13.600 12H1.400A1.200 1.200 0 0 1 .2 10.800V2.200A1.200 1.200 0 0 1 1.400 1ZM1.300 2.100V10.900H13.700V2.100ZM2.200 10V8.400L4.600 6 6 7.400 10 3.500 12.800 6.300V10ZM3.800 3A1.300 1.300 0 1 0 3.800 5.600 1.300 1.300 0 0 0 3.800 3Z"/></svg><span class="tt" style="letter-spacing:1.19px">AmyMind</span></a></td><td class="c3"><a class="cj">AI思维导图</a></td><td class="c4"></td><td class="c5"><span class="cj">AI思维导图</span></td><td class="c6"><a class="cj">创始人</a></td><td class="c7">2023-12-14</td><td class="c8"><span class="b red"><svg class="i" width="12" height="11" viewBox="0 0 15 13.500" fill="currentColor" style="left:6px;top:6.500px"><path d="M2.400 1.800H8.700L7.400 3.100H2.600C2.300 3.100 2 3.400 2 3.700V11.300C2 11.600 2.300 11.900 2.600 11.900H10.200C10.500 11.900 10.800 11.600 10.800 11.300V8.200L12.100 6.900V11.500A1.700 1.700 0 0 1 10.400 13.200H2.400A1.700 1.700 0 0 1 .7 11.500V3.500A1.700 1.700 0 0 1 2.400 1.800Z"/><path d="M11.300 1 13.600 3.300 8 8.900 5.200 9.400 5.700 6.600ZM12 .3C12.400-.1 13-.1 13.400.3L14.300 1.200C14.700 1.600 14.700 2.200 14.300 2.600L14 2.900 11.700.6Z"/></svg><b style="left:22px">修改</b></span><span class="b blue"><svg class="i" width="12" height="10" viewBox="0 0 13 12" fill="currentColor" style="left:5px;top:7.500px"><path fill-rule="evenodd" d="M1.300.8H11.700A1.100 1.100 0 0 1 12.800 1.900V10.100A1.100 1.100 0 0 1 11.700 11.200H1.300A1.100 1.100 0 0 1 .2 10.100V1.900A1.100 1.100 0 0 1 1.300.8ZM1.300 3.200V5H4.100V3.200ZM5.100 3.200V5H7.900V3.200ZM8.900 3.200V5H11.700V3.200ZM1.300 5.900V7.600H4.100V5.900ZM5.100 5.900V7.600H7.900V5.900ZM8.900 5.900V7.600H11.700V5.900ZM1.300 8.500V10.200H4.100V8.500ZM5.100 8.500V10.200H7.900V8.500ZM8.900 8.500V10.200H11.700V8.500Z"/></svg><b style="left:20px">反馈</b><em style="left:51px">(0)</em></span><span class="b yel"><svg class="i" width="13" height="11" viewBox="0 0 15 13" fill="currentColor" style="left:6px;top:7.500px"><path d="M4.300 2.700 5.200 3.600 2.200 6.600 5.200 9.600 4.300 10.500.4 6.600ZM10.700 2.700 14.600 6.600 10.700 10.500 9.800 9.600 12.800 6.600 9.800 3.600ZM8.300 1.300 9.500 1.600 6.700 11.900 5.500 11.600Z"/></svg><b style="left:22px">前端调用</b></span></td></tr>
<tr><td class="c0"><span class="cb"></span></td><td class="c1">621</td><td class="c2"><a><svg class="i" width="16" height="13" viewBox="0 0 15 12.600" fill="currentColor" style=""><path fill-rule="evenodd" d="M1.400 1H13.600A1.200 1.200 0 0 1 14.800 2.200V10.800A1.200 1.200 0 0 1 13.600 12H1.400A1.200 1.200 0 0 1 .2 10.800V2.200A1.200 1.200 0 0 1 1.400 1ZM1.300 2.100V10.900H13.700V2.100ZM2.200 10V8.400L4.600 6 6 7.400 10 3.500 12.800 6.300V10ZM3.800 3A1.300 1.300 0 1 0 3.800 5.600 1.300 1.300 0 0 0 3.800 3Z"/></svg><span class="tt" style="letter-spacing:.8px">Xmind Copilot</span></a></td><td class="c3"><a class="cj">AI思维导图</a></td><td class="c4"></td><td class="c5"><span class="cj">AI思维导图</span></td><td class="c6"><a class="cj">创始人</a></td><td class="c7">2023-12-14</td><td class="c8"><span class="b red"><svg class="i" width="12" height="11" viewBox="0 0 15 13.500" fill="currentColor" style="left:6px;top:6.500px"><path d="M2.400 1.800H8.700L7.400 3.100H2.600C2.300 3.100 2 3.400 2 3.700V11.300C2 11.600 2.300 11.900 2.600 11.900H10.200C10.500 11.900 10.800 11.600 10.800 11.300V8.200L12.100 6.900V11.500A1.700 1.700 0 0 1 10.400 13.200H2.400A1.700 1.700 0 0 1 .7 11.500V3.500A1.700 1.700 0 0 1 2.400 1.800Z"/><path d="M11.300 1 13.600 3.300 8 8.900 5.200 9.400 5.700 6.600ZM12 .3C12.400-.1 13-.1 13.400.3L14.300 1.200C14.700 1.600 14.700 2.200 14.300 2.600L14 2.900 11.700.6Z"/></svg><b style="left:22px">修改</b></span><span class="b blue"><svg class="i" width="12" height="10" viewBox="0 0 13 12" fill="currentColor" style="left:5px;top:7.500px"><path fill-rule="evenodd" d="M1.300.8H11.700A1.100 1.100 0 0 1 12.800 1.900V10.100A1.100 1.100 0 0 1 11.700 11.200H1.300A1.100 1.100 0 0 1 .2 10.100V1.900A1.100 1.100 0 0 1 1.300.8ZM1.300 3.200V5H4.100V3.200ZM5.100 3.200V5H7.900V3.200ZM8.900 3.200V5H11.700V3.200ZM1.300 5.900V7.600H4.100V5.900ZM5.100 5.900V7.600H7.900V5.900ZM8.900 5.900V7.600H11.700V5.900ZM1.300 8.500V10.200H4.100V8.500ZM5.100 8.500V10.200H7.900V8.500ZM8.900 8.500V10.200H11.700V8.500Z"/></svg><b style="left:20px">反馈</b><em style="left:51px">(0)</em></span><span class="b yel"><svg class="i" width="13" height="11" viewBox="0 0 15 13" fill="currentColor" style="left:6px;top:7.500px"><path d="M4.300 2.700 5.200 3.600 2.200 6.600 5.200 9.600 4.300 10.500.4 6.600ZM10.700 2.700 14.600 6.600 10.700 10.500 9.800 9.600 12.800 6.600 9.800 3.600ZM8.300 1.300 9.500 1.600 6.700 11.900 5.500 11.600Z"/></svg><b style="left:22px">前端调用</b></span></td></tr>
<tr><td class="c0"><span class="cb"></span></td><td class="c1">613</td><td class="c2"><a><svg class="i" width="16" height="13" viewBox="0 0 15 12.600" fill="currentColor" style=""><path fill-rule="evenodd" d="M1.400 1H13.600A1.200 1.200 0 0 1 14.800 2.200V10.800A1.200 1.200 0 0 1 13.600 12H1.400A1.200 1.200 0 0 1 .2 10.800V2.200A1.200 1.200 0 0 1 1.400 1ZM1.300 2.100V10.900H13.700V2.100ZM2.200 10V8.400L4.600 6 6 7.400 10 3.500 12.800 6.300V10ZM3.800 3A1.300 1.300 0 1 0 3.800 5.600 1.300 1.300 0 0 0 3.800 3Z"/></svg><span class="tt cj" style="letter-spacing:.3px">博思AI白板</span></a></td><td class="c3"><a class="cj">AI思维导图</a></td><td class="c4"></td><td class="c5"><span class="cj">AI思维导图</span></td><td class="c6"><a class="cj">创始人</a></td><td class="c7">2023-12-14</td><td class="c8"><span class="b red"><svg class="i" width="12" height="11" viewBox="0 0 15 13.500" fill="currentColor" style="left:6px;top:6.500px"><path d="M2.400 1.800H8.700L7.400 3.100H2.600C2.300 3.100 2 3.400 2 3.700V11.300C2 11.600 2.300 11.900 2.600 11.900H10.200C10.500 11.900 10.800 11.600 10.800 11.300V8.200L12.100 6.900V11.500A1.700 1.700 0 0 1 10.400 13.200H2.400A1.700 1.700 0 0 1 .7 11.500V3.500A1.700 1.700 0 0 1 2.400 1.800Z"/><path d="M11.300 1 13.600 3.300 8 8.900 5.200 9.400 5.700 6.600ZM12 .3C12.400-.1 13-.1 13.400.3L14.300 1.200C14.700 1.600 14.700 2.200 14.300 2.600L14 2.900 11.700.6Z"/></svg><b style="left:22px">修改</b></span><span class="b blue"><svg class="i" width="12" height="10" viewBox="0 0 13 12" fill="currentColor" style="left:5px;top:7.500px"><path fill-rule="evenodd" d="M1.300.8H11.700A1.100 1.100 0 0 1 12.800 1.900V10.100A1.100 1.100 0 0 1 11.700 11.200H1.300A1.100 1.100 0 0 1 .2 10.100V1.900A1.100 1.100 0 0 1 1.300.8ZM1.300 3.200V5H4.100V3.200ZM5.100 3.200V5H7.900V3.200ZM8.900 3.200V5H11.700V3.200ZM1.300 5.900V7.600H4.100V5.900ZM5.100 5.900V7.600H7.900V5.900ZM8.900 5.900V7.600H11.700V5.900ZM1.300 8.500V10.200H4.100V8.500ZM5.100 8.500V10.200H7.900V8.500ZM8.900 8.500V10.200H11.700V8.500Z"/></svg><b style="left:20px">反馈</b><em style="left:51px">(0)</em></span><span class="b yel"><svg class="i" width="13" height="11" viewBox="0 0 15 13" fill="currentColor" style="left:6px;top:7.500px"><path d="M4.300 2.700 5.200 3.600 2.200 6.600 5.200 9.600 4.300 10.500.4 6.600ZM10.700 2.700 14.600 6.600 10.700 10.500 9.800 9.600 12.800 6.600 9.800 3.600ZM8.300 1.300 9.500 1.600 6.700 11.900 5.500 11.600Z"/></svg><b style="left:22px">前端调用</b></span></td></tr>
<tr><td class="c0"><span class="cb"></span></td><td class="c1">618</td><td class="c2"><a><svg class="i" width="16" height="13" viewBox="0 0 15 12.600" fill="currentColor" style=""><path fill-rule="evenodd" d="M1.400 1H13.600A1.200 1.200 0 0 1 14.800 2.200V10.800A1.200 1.200 0 0 1 13.600 12H1.400A1.200 1.200 0 0 1 .2 10.800V2.200A1.200 1.200 0 0 1 1.400 1ZM1.300 2.100V10.900H13.700V2.100ZM2.200 10V8.400L4.600 6 6 7.400 10 3.500 12.800 6.300V10ZM3.800 3A1.300 1.300 0 1 0 3.800 5.600 1.300 1.300 0 0 0 3.800 3Z"/></svg><span class="tt" style="letter-spacing:.85px">ChatMind</span></a></td><td class="c3"><a class="cj">AI思维导图</a></td><td class="c4"></td><td class="c5"><span class="cj">AI思维导图</span></td><td class="c6"><a class="cj">创始人</a></td><td class="c7">2023-12-14</td><td class="c8"><span class="b red"><svg class="i" width="12" height="11" viewBox="0 0 15 13.500" fill="currentColor" style="left:6px;top:6.500px"><path d="M2.400 1.800H8.700L7.400 3.100H2.600C2.300 3.100 2 3.400 2 3.700V11.300C2 11.600 2.300 11.900 2.600 11.900H10.200C10.500 11.900 10.800 11.600 10.800 11.300V8.200L12.100 6.900V11.500A1.700 1.700 0 0 1 10.400 13.200H2.400A1.700 1.700 0 0 1 .7 11.500V3.500A1.700 1.700 0 0 1 2.400 1.800Z"/><path d="M11.300 1 13.600 3.300 8 8.900 5.200 9.400 5.700 6.600ZM12 .3C12.400-.1 13-.1 13.400.3L14.300 1.200C14.700 1.600 14.700 2.200 14.300 2.600L14 2.900 11.700.6Z"/></svg><b style="left:22px">修改</b></span><span class="b blue"><svg class="i" width="12" height="10" viewBox="0 0 13 12" fill="currentColor" style="left:5px;top:7.500px"><path fill-rule="evenodd" d="M1.300.8H11.700A1.100 1.100 0 0 1 12.800 1.900V10.100A1.100 1.100 0 0 1 11.700 11.200H1.300A1.100 1.100 0 0 1 .2 10.100V1.900A1.100 1.100 0 0 1 1.300.8ZM1.300 3.200V5H4.100V3.200ZM5.100 3.200V5H7.900V3.200ZM8.900 3.200V5H11.700V3.200ZM1.300 5.900V7.600H4.100V5.900ZM5.100 5.900V7.600H7.900V5.900ZM8.900 5.900V7.600H11.700V5.900ZM1.300 8.500V10.200H4.100V8.500ZM5.100 8.500V10.200H7.900V8.500ZM8.900 8.500V10.200H11.700V8.500Z"/></svg><b style="left:20px">反馈</b><em style="left:51px">(0)</em></span><span class="b yel"><svg class="i" width="13" height="11" viewBox="0 0 15 13" fill="currentColor" style="left:6px;top:7.500px"><path d="M4.300 2.700 5.200 3.600 2.200 6.600 5.200 9.600 4.300 10.500.4 6.600ZM10.700 2.700 14.600 6.600 10.700 10.500 9.800 9.600 12.800 6.600 9.800 3.600ZM8.300 1.300 9.500 1.600 6.700 11.900 5.500 11.600Z"/></svg><b style="left:22px">前端调用</b></span></td></tr>
<tr><td class="c0"><span class="cb"></span></td><td class="c1">620</td><td class="c2"><a><svg class="i" width="16" height="13" viewBox="0 0 15 12.600" fill="currentColor" style=""><path fill-rule="evenodd" d="M1.400 1H13.600A1.200 1.200 0 0 1 14.800 2.200V10.800A1.200 1.200 0 0 1 13.600 12H1.400A1.200 1.200 0 0 1 .2 10.800V2.200A1.200 1.200 0 0 1 1.400 1ZM1.300 2.100V10.900H13.700V2.100ZM2.200 10V8.400L4.600 6 6 7.400 10 3.500 12.800 6.300V10ZM3.800 3A1.300 1.300 0 1 0 3.800 5.600 1.300 1.300 0 0 0 3.800 3Z"/></svg><span class="tt cj" style="letter-spacing:.3px">妙办AI画图工具</span></a></td><td class="c3"><a class="cj">AI思维导图</a></td><td class="c4"></td><td class="c5"><span class="cj">AI思维导图</span></td><td class="c6"><a class="cj">创始人</a></td><td class="c7">2023-12-14</td><td class="c8"><span class="b red"><svg class="i" width="12" height="11" viewBox="0 0 15 13.500" fill="currentColor" style="left:6px;top:6.500px"><path d="M2.400 1.800H8.700L7.400 3.100H2.600C2.300 3.100 2 3.400 2 3.700V11.300C2 11.600 2.300 11.900 2.600 11.900H10.200C10.500 11.900 10.800 11.600 10.800 11.300V8.200L12.100 6.900V11.500A1.700 1.700 0 0 1 10.400 13.200H2.400A1.700 1.700 0 0 1 .7 11.500V3.500A1.700 1.700 0 0 1 2.400 1.800Z"/><path d="M11.300 1 13.600 3.300 8 8.900 5.200 9.400 5.700 6.600ZM12 .3C12.400-.1 13-.1 13.400.3L14.300 1.200C14.700 1.600 14.700 2.200 14.300 2.600L14 2.900 11.700.6Z"/></svg><b style="left:22px">修改</b></span><span class="b blue"><svg class="i" width="12" height="10" viewBox="0 0 13 12" fill="currentColor" style="left:5px;top:7.500px"><path fill-rule="evenodd" d="M1.300.8H11.700A1.100 1.100 0 0 1 12.800 1.900V10.100A1.100 1.100 0 0 1 11.700 11.200H1.300A1.100 1.100 0 0 1 .2 10.100V1.900A1.100 1.100 0 0 1 1.300.8ZM1.300 3.200V5H4.100V3.200ZM5.100 3.200V5H7.900V3.200ZM8.900 3.200V5H11.700V3.200ZM1.300 5.900V7.600H4.100V5.900ZM5.100 5.900V7.600H7.900V5.900ZM8.900 5.900V7.600H11.700V5.900ZM1.300 8.500V10.200H4.100V8.500ZM5.100 8.500V10.200H7.900V8.500ZM8.900 8.500V10.200H11.700V8.500Z"/></svg><b style="left:20px">反馈</b><em style="left:51px">(0)</em></span><span class="b yel"><svg class="i" width="13" height="11" viewBox="0 0 15 13" fill="currentColor" style="left:6px;top:7.500px"><path d="M4.300 2.700 5.200 3.600 2.200 6.600 5.200 9.600 4.300 10.500.4 6.600ZM10.700 2.700 14.600 6.600 10.700 10.500 9.800 9.600 12.800 6.600 9.800 3.600ZM8.300 1.300 9.500 1.600 6.700 11.900 5.500 11.600Z"/></svg><b style="left:22px">前端调用</b></span></td></tr>
<tr><td class="c0"><span class="cb"></span></td><td class="c1">612</td><td class="c2"><a><svg class="i" width="16" height="13" viewBox="0 0 15 12.600" fill="currentColor" style=""><path fill-rule="evenodd" d="M1.400 1H13.600A1.200 1.200 0 0 1 14.800 2.200V10.800A1.200 1.200 0 0 1 13.600 12H1.400A1.200 1.200 0 0 1 .2 10.800V2.200A1.200 1.200 0 0 1 1.400 1ZM1.300 2.100V10.900H13.700V2.100ZM2.200 10V8.400L4.600 6 6 7.400 10 3.500 12.800 6.300V10ZM3.800 3A1.300 1.300 0 1 0 3.800 5.600 1.300 1.300 0 0 0 3.800 3Z"/></svg><span class="tt" style="letter-spacing:.63px">Ayoa Ultimate</span></a></td><td class="c3"><a class="cj">AI思维导图</a></td><td class="c4"></td><td class="c5"><span class="cj">AI思维导图</span></td><td class="c6"><a class="cj">创始人</a></td><td class="c7">2023-12-14</td><td class="c8"><span class="b red"><svg class="i" width="12" height="11" viewBox="0 0 15 13.500" fill="currentColor" style="left:6px;top:6.500px"><path d="M2.400 1.800H8.700L7.400 3.100H2.600C2.300 3.100 2 3.400 2 3.700V11.300C2 11.600 2.300 11.900 2.600 11.900H10.200C10.500 11.900 10.800 11.600 10.800 11.300V8.200L12.100 6.900V11.500A1.700 1.700 0 0 1 10.400 13.200H2.400A1.700 1.700 0 0 1 .7 11.500V3.500A1.700 1.700 0 0 1 2.400 1.800Z"/><path d="M11.300 1 13.600 3.300 8 8.900 5.200 9.400 5.700 6.600ZM12 .3C12.400-.1 13-.1 13.400.3L14.300 1.200C14.700 1.600 14.700 2.200 14.300 2.600L14 2.900 11.700.6Z"/></svg><b style="left:22px">修改</b></span><span class="b blue"><svg class="i" width="12" height="10" viewBox="0 0 13 12" fill="currentColor" style="left:5px;top:7.500px"><path fill-rule="evenodd" d="M1.300.8H11.700A1.100 1.100 0 0 1 12.800 1.900V10.100A1.100 1.100 0 0 1 11.700 11.200H1.300A1.100 1.100 0 0 1 .2 10.100V1.900A1.100 1.100 0 0 1 1.300.8ZM1.300 3.200V5H4.100V3.200ZM5.100 3.200V5H7.900V3.200ZM8.900 3.200V5H11.700V3.200ZM1.300 5.900V7.600H4.100V5.900ZM5.100 5.900V7.600H7.900V5.900ZM8.900 5.900V7.600H11.700V5.900ZM1.300 8.500V10.200H4.100V8.500ZM5.100 8.500V10.200H7.900V8.500ZM8.900 8.500V10.200H11.700V8.500Z"/></svg><b style="left:20px">反馈</b><em style="left:51px">(0)</em></span><span class="b yel"><svg class="i" width="13" height="11" viewBox="0 0 15 13" fill="currentColor" style="left:6px;top:7.500px"><path d="M4.300 2.700 5.200 3.600 2.200 6.600 5.200 9.600 4.300 10.500.4 6.600ZM10.700 2.700 14.600 6.600 10.700 10.500 9.800 9.600 12.800 6.600 9.800 3.600ZM8.300 1.300 9.500 1.600 6.700 11.900 5.500 11.600Z"/></svg><b style="left:22px">前端调用</b></span></td></tr>
<tr><td class="c0"><span class="cb"></span></td><td class="c1">623</td><td class="c2"><a><svg class="i" width="16" height="13" viewBox="0 0 15 12.600" fill="currentColor" style=""><path fill-rule="evenodd" d="M1.400 1H13.600A1.200 1.200 0 0 1 14.800 2.200V10.800A1.200 1.200 0 0 1 13.600 12H1.400A1.200 1.200 0 0 1 .2 10.800V2.200A1.200 1.200 0 0 1 1.400 1ZM1.300 2.100V10.900H13.700V2.100ZM2.200 10V8.400L4.600 6 6 7.400 10 3.500 12.800 6.300V10ZM3.800 3A1.300 1.300 0 1 0 3.800 5.600 1.300 1.300 0 0 0 3.800 3Z"/></svg><span class="tt cj" style="letter-spacing:.2px">印象图记</span></a></td><td class="c3"><a class="cj">AI思维导图</a></td><td class="c4"></td><td class="c5"><span class="cj">AI思维导图</span></td><td class="c6"><a class="cj">创始人</a></td><td class="c7">2023-12-14</td><td class="c8"><span class="b red"><svg class="i" width="12" height="11" viewBox="0 0 15 13.500" fill="currentColor" style="left:6px;top:6.500px"><path d="M2.400 1.800H8.700L7.400 3.100H2.600C2.300 3.100 2 3.400 2 3.700V11.300C2 11.600 2.300 11.900 2.600 11.900H10.200C10.500 11.900 10.800 11.600 10.800 11.300V8.200L12.100 6.900V11.500A1.700 1.700 0 0 1 10.400 13.200H2.400A1.700 1.700 0 0 1 .7 11.500V3.500A1.700 1.700 0 0 1 2.400 1.800Z"/><path d="M11.300 1 13.600 3.300 8 8.900 5.200 9.400 5.700 6.600ZM12 .3C12.400-.1 13-.1 13.400.3L14.300 1.200C14.700 1.600 14.700 2.200 14.300 2.600L14 2.900 11.700.6Z"/></svg><b style="left:22px">修改</b></span><span class="b blue"><svg class="i" width="12" height="10" viewBox="0 0 13 12" fill="currentColor" style="left:5px;top:7.500px"><path fill-rule="evenodd" d="M1.300.8H11.700A1.100 1.100 0 0 1 12.800 1.900V10.100A1.100 1.100 0 0 1 11.700 11.200H1.300A1.100 1.100 0 0 1 .2 10.100V1.900A1.100 1.100 0 0 1 1.300.8ZM1.300 3.200V5H4.100V3.200ZM5.100 3.200V5H7.900V3.200ZM8.900 3.200V5H11.700V3.200ZM1.300 5.900V7.600H4.100V5.900ZM5.100 5.900V7.600H7.900V5.900ZM8.900 5.900V7.600H11.700V5.900ZM1.300 8.500V10.200H4.100V8.500ZM5.100 8.500V10.200H7.900V8.500ZM8.900 8.500V10.200H11.700V8.500Z"/></svg><b style="left:20px">反馈</b><em style="left:51px">(0)</em></span><span class="b yel"><svg class="i" width="13" height="11" viewBox="0 0 15 13" fill="currentColor" style="left:6px;top:7.500px"><path d="M4.300 2.700 5.200 3.600 2.200 6.600 5.200 9.600 4.300 10.500.4 6.600ZM10.700 2.700 14.600 6.600 10.700 10.500 9.800 9.600 12.800 6.600 9.800 3.600ZM8.300 1.300 9.500 1.600 6.700 11.900 5.500 11.600Z"/></svg><b style="left:22px">前端调用</b></span></td></tr>
</tbody>
</table>

<div class="pg" style="left:513px;top:900px;width:47px"></div>
<div class="pg" style="left:1411px;width:31px"></div>
<div class="pg" style="left:1446px;width:34px;background:#40a9e2;border-color:#40a9e2"></div>
<div class="pg" style="left:1484px;width:34px"></div>
<div class="pg" style="left:1522px;width:34px"></div>
<div class="pg" style="left:1560px;width:34px"></div>
<div class="pg" style="left:1598px;width:35px"></div>
<div class="pg" style="left:1637px;width:36px"></div>
<div class="pg" style="left:1677px;width:42px"></div>
<div class="pg" style="left:1723px;width:30px"></div>
<div class="pg" style="left:1759px;width:60px;border-radius:4px 0 0 0"></div>
<div class="pg" style="left:1818px;width:54px;background:#40a9e2;border-color:#40a9e2;border-radius:0 4px 0 0"></div>

<div style="position:absolute;left:1912px;top:70px;width:8px;height:838px;background:#dadada"></div>
<div style="position:absolute;left:1912px;top:70px;width:8px;height:753px;background:#a8a8a8"></div>
<div id="tr" style="position:absolute;left:1874px;top:202px;width:46px;height:40px;border-radius:20px 0 0 20px;background:linear-gradient(160deg,rgba(200,214,252,.92),rgba(160,174,238,.88))"></div>
<div style="position:absolute;left:1888px;top:211px;width:22px;height:22px;border-radius:3px;background:#78a3f0;color:#fff;font-size:16px;line-height:23px;text-align:center;font-weight:300">译</div>
<div style="position:absolute;left:1876px;top:872px;width:36px;height:36px;background:#fff"></div>
<svg class="abs" style="left:1885.800px;top:880.300px" width="15.600" height="19.700" viewBox="0 0 15.600 19.700"><path fill="#dd4814" d="M7.700 0C8.500 1 9.400 2 9.200 3.500 9 5 8.600 6 8.800 6.800 9.200 7.600 9.600 8.200 10.100 8.600 10.600 8.200 11.200 7.800 11.800 7.500 13 8.200 14 9.200 14.500 10.300 15.200 11.400 15.500 12.400 15.400 13.400 15.300 14.600 15 15.600 14.500 16.400 13.600 17.600 12.400 18.600 11 19.100 11.800 18.200 12.300 17.200 12.300 16 12.400 14.800 12.200 13.800 11.800 12.900 11.200 11.800 10.200 10.900 9.200 10.300 8.400 9.800 7.600 9.400 7 9 6.400 9.600 5.900 10.400 5.700 11.200 6.200 11.600 6.800 12.200 7 12.900 7.100 13.600 6.700 14.200 6.100 14.300 5.600 14.400 5.200 14.200 4.800 14.300 4 14.600 3.400 15.200 3.100 16 2.800 17.300 3.200 18.600 3.900 19.500 2.800 19 1.900 18.300 1.300 17.300.5 16.200.1 14.800.1 13.400.1 11.800.5 10.300 1.300 9 2 7.800 2.900 6.800 3.900 5.900 5 4.900 6.200 4 7 2.900 7.500 2 7.700 1 7.700 0Z"/></svg>
<div style="position:absolute;left:158px;top:908px;width:1762px;height:5px;background:#f2f3f6"></div>

</body></html>
